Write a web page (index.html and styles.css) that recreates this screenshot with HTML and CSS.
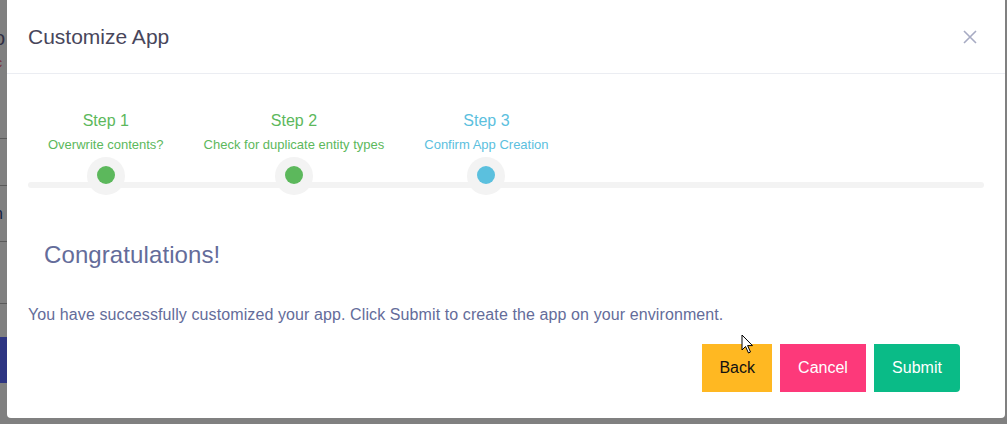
FILE: index.html
```html
<!DOCTYPE html>
<html>
<head>
  <link rel="stylesheet" href="styles.css">
</head>
<body>
  <div class="page">
    <div class="page-strip">
      <div class="strip-head">o</div>
      <div class="strip-sub">c</div>
      <div class="strip-row row-a"></div>
      <div class="strip-row row-b"></div>
      <div class="strip-row row-c strip-dark">n</div>
      <div class="strip-row row-d"></div>
      <div class="strip-btn"></div>
    </div>
  </div>

  <div class="modal">
    <div class="modal-header">
      <h2 class="modal-title">Customize App</h2>
      <button class="close" aria-label="Close">
        <svg width="14" height="14" viewBox="0 0 14 14"><path d="M1 1L13 13M13 1L1 13" stroke="#a7abc3" stroke-width="1.6" fill="none"/></svg>
      </button>
    </div>

    <div class="modal-body">
      <ul class="wizard-nav">
        <li class="step done">
          <div class="step-title">Step 1</div>
          <div class="step-desc">Overwrite contents?</div>
          <span class="dot"></span>
        </li>
        <li class="step done">
          <div class="step-title">Step 2</div>
          <div class="step-desc">Check for duplicate entity types</div>
          <span class="dot"></span>
        </li>
        <li class="step active">
          <div class="step-title">Step 3</div>
          <div class="step-desc">Confirm App Creation</div>
          <span class="dot"></span>
        </li>
      </ul>

      <h3 class="congrats">Congratulations!</h3>
      <p class="message">You have successfully customized your app. Click Submit to create the app on your environment.</p>

      <div class="actions">
        <button class="btn btn-warning">Back</button>
        <button class="btn btn-danger">Cancel</button>
        <button class="btn btn-success">Submit</button>
      </div>
    </div>
  </div>

  <svg class="cursor" width="13" height="20" viewBox="0 0 13 20">
    <path d="M1 1L1 16L4.5 12.5L7.5 19L9.5 18L6.6 11.6L11.5 11.6Z" fill="#fff" stroke="#000" stroke-width="1" stroke-linejoin="round"/>
  </svg>
</body>
</html>
```

FILE: styles.css
```css
body {
  margin: 0;
  background: #808080;
  font-family: "Liberation Sans", Arial, sans-serif;
  height: 424px;
  overflow: hidden;
}
.page {
  width: 7px;
  overflow: hidden;
}
.page-strip {
  padding-top: 26px;
  color: #2f2f45;
}
.strip-head {
  font-size: 20px;
  line-height: 24px;
  margin-left: -6px;
}
.strip-sub {
  font-size: 12px;
  line-height: 14px;
  color: #7a2a3a;
  margin: 6px 0 0 -4px;
}
.strip-row {
  border-bottom: 1px solid #5a5a5a;
}
.row-a {
  height: 68px;
}
.row-b {
  height: 46px;
}
.row-c {
  height: 55px;
}
.row-d {
  height: 61px;
}
.strip-dark {
  font-size: 16px;
  line-height: 55px;
  color: #101a40;
  margin-left: -6px;
}
.strip-btn {
  margin-top: 33px;
  height: 46px;
  background: #2e3582;
}
.modal {
  position: absolute;
  left: 7px;
  top: 0;
  width: 998px;
  height: 418px;
  background: #fff;
  border-radius: 0 0 4px 4px;
}
.modal-header {
  display: flex;
  align-items: center;
  justify-content: space-between;
  height: 73px;
  padding: 0 28px 0 21px;
  border-bottom: 1px solid #ebedf2;
}
.modal-title {
  margin: 0;
  font-size: 21px;
  font-weight: normal;
  color: #48465b;
  line-height: 24px;
}
.close {
  border: 0;
  background: none;
  padding: 0;
  width: 14px;
  height: 14px;
  display: flex;
}
.modal-body {
  padding: 0 21px;
}
.wizard-nav {
  position: relative;
  display: flex;
  list-style: none;
  margin: 0;
  padding: 38px 0 0;
}
.wizard-nav::before {
  content: "";
  position: absolute;
  left: 0;
  right: 0;
  bottom: 7px;
  height: 6px;
  border-radius: 3px;
  background: #f3f3f3;
}
.step {
  position: relative;
  display: flex;
  flex-direction: column;
  align-items: center;
  padding: 0 20px;
}
.step-title {
  font-size: 16px;
  line-height: 18px;
}
.step-desc {
  font-size: 13px;
  line-height: 15px;
  margin-top: 7px;
}
.dot {
  display: flex;
  align-items: center;
  justify-content: center;
  width: 38px;
  height: 38px;
  margin-top: 5px;
  border-radius: 50%;
  background: #f3f3f3;
}
.dot::after {
  content: "";
  width: 18px;
  height: 18px;
  margin-top: -2px;
  border-radius: 50%;
  background: currentColor;
}
.done {
  color: #5cb85c;
}
.active {
  color: #5bc0de;
}
.congrats {
  margin: 46px 0 0 16px;
  font-size: 24px;
  line-height: 28px;
  font-weight: normal;
  letter-spacing: 0.1px;
  color: #646c9a;
}
.message {
  margin: 36px 0 0;
  font-size: 16px;
  line-height: 20px;
  letter-spacing: 0.1px;
  color: #646c9a;
}
.actions {
  display: flex;
  justify-content: flex-end;
  gap: 8px;
  margin-top: 19px;
  padding-right: 24px;
}
.btn {
  border: 0;
  padding: 14px 17px;
  font-family: inherit;
  font-size: 16px;
  line-height: 20px;
  color: #fff;
  border-radius: 0;
}
.btn-warning {
  background: #ffb822;
  color: #111;
}
.btn-danger {
  background: #fd397a;
  width: 86px;
}
.btn-success {
  background: #0abb87;
  width: 86px;
  border-radius: 0 4px 4px 0;
}
.cursor {
  position: absolute;
  left: 741px;
  top: 334px;
}
```
